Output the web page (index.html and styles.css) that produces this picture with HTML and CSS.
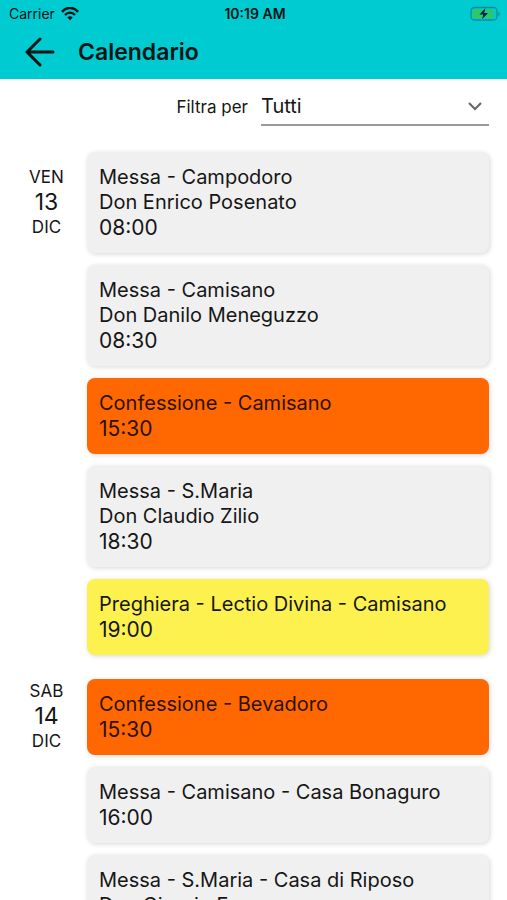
FILE: index.html
```html
<!DOCTYPE html>
<html lang="it">
<head>
<meta charset="utf-8">
<meta name="viewport" content="width=device-width, initial-scale=1">
<title>Calendario</title>
<link rel="stylesheet" href="styles.css">
</head>
<body>
<header class="top">
  <div class="status">
    <div class="carrier">
      <span>Carrier</span>
      <svg width="18" height="14" viewBox="0 0 18 14" fill="none" stroke="currentColor" aria-hidden="true">
        <path d="M1 4.800C5.300-.3 12.700-.3 17 4.800" stroke-width="2.600"/>
        <path d="M4 8C6.700 4.900 11.300 4.900 14 8" stroke-width="2.300"/>
        <path d="M9 13.300 6.300 10.400Q9 8 11.700 10.400Z" fill="currentColor" stroke="none"/>
      </svg>
    </div>
    <time class="clock">10:19 AM</time>
    <div class="battery">
      <svg width="31" height="16" viewBox="0 0 31 16" aria-hidden="true">
        <rect x="1" y="1.500" width="26" height="12.500" rx="3.500" fill="none" stroke="#128b90" stroke-width="1.300"/>
        <rect x="3" y="3.500" width="20" height="8.500" rx="1.500" fill="#35c759"/>
        <path d="M28.500 5.500Q31 8 28.500 10.500Z" fill="#128b90"/>
        <path d="M15.500 2 9.500 8.600H13.300L12 13.600 18 7H14.200Z" fill="#062024" stroke="#00cbd0" stroke-width="1.500" paint-order="stroke"/>
      </svg>
    </div>
  </div>
  <div class="bar">
    <button class="back" type="button" aria-label="Indietro">
      <svg width="30" height="30" viewBox="0 0 30 30" fill="none" stroke="currentColor" stroke-width="3" stroke-linecap="round" stroke-linejoin="round" aria-hidden="true">
        <path d="M28 15H2M15 2 2 15 15 28"/>
      </svg>
    </button>
    <h1 class="title">Calendario</h1>
  </div>
</header>
<main class="content">
  <form class="filter">
    <label for="tipo">Filtra per</label>
    <div class="select">
      <select id="tipo">
        <option>Tutti</option>
        <option>Messa</option>
        <option>Confessione</option>
        <option>Preghiera</option>
      </select>
      <svg class="chevron" width="14" height="10" viewBox="0 0 14 10" fill="none" stroke="currentColor" stroke-width="2" aria-hidden="true">
        <path d="M1 2 7 8 13 2"/>
      </svg>
    </div>
  </form>
  <section class="day">
    <h2 class="date"><span>VEN</span><span class="num">13</span><span>DIC</span></h2>
    <ul class="events">
      <li class="card"><p>Messa - Campodoro</p><p>Don Enrico Posenato</p><p class="time">08:00</p></li>
      <li class="card"><p>Messa - Camisano</p><p>Don Danilo Meneguzzo</p><p class="time">08:30</p></li>
      <li class="card confession"><p>Confessione - Camisano</p><p class="time">15:30</p></li>
      <li class="card"><p>Messa - S.Maria</p><p>Don Claudio Zilio</p><p class="time">18:30</p></li>
      <li class="card prayer"><p>Preghiera - Lectio Divina - Camisano</p><p class="time">19:00</p></li>
    </ul>
  </section>
  <section class="day">
    <h2 class="date"><span>SAB</span><span class="num">14</span><span>DIC</span></h2>
    <ul class="events">
      <li class="card confession"><p>Confessione - Bevadoro</p><p class="time">15:30</p></li>
      <li class="card"><p>Messa - Camisano - Casa Bonaguro</p><p class="time">16:00</p></li>
      <li class="card"><p>Messa - S.Maria - Casa di Riposo</p><p>Don Giorgio Fava</p><p class="time">16:30</p></li>
    </ul>
  </section>
</main>
</body>
</html>
```
FILE: styles.css
```css
* {
  box-sizing: border-box;
}

body {
  margin: 0;
  height: 100vh;
  display: flex;
  flex-direction: column;
  font-family: Inter, "Liberation Sans", sans-serif;
  color: #161616;
  background: #fff;
}

.top {
  flex: none;
  background: #00cbd0;
  color: #061416;
}

.status {
  display: grid;
  grid-template-columns: 1fr auto 1fr;
  align-items: center;
  height: 27px;
  padding: 0 6px 0 9px;
  font-size: 14px;
}

.carrier {
  display: flex;
  align-items: center;
  gap: 6px;
}

.clock {
  font-weight: 600;
}

.battery {
  display: flex;
  justify-content: flex-end;
}

.bar {
  display: flex;
  align-items: center;
  gap: 23px;
  height: 52px;
  padding: 0 25px 2px;
}

.back {
  display: flex;
  padding: 0;
  border: 0;
  background: none;
  color: inherit;
}

.title {
  margin: 0;
  font-size: 23px;
  font-weight: 600;
}

.content {
  flex: 1;
  min-height: 0;
  overflow-y: auto;
  scrollbar-width: none;
  padding: 9px 18px 24px 0;
}

.filter {
  display: flex;
  justify-content: flex-end;
  align-items: center;
  gap: 13px;
  margin-bottom: 26px;
  font-size: 17px;
}

.select {
  position: relative;
  flex: 0 1 228px;
  border-bottom: 2px solid #999;
}

.select select {
  display: block;
  width: 100%;
  height: 36px;
  padding: 0;
  border: 0;
  appearance: none;
  background: none;
  font: inherit;
  font-size: 20px;
  color: inherit;
}

.chevron {
  position: absolute;
  right: 7px;
  top: 13px;
  color: #666;
  pointer-events: none;
}

.day {
  display: grid;
  grid-template-columns: 87px 1fr;
  margin-bottom: 24px;
}

.date {
  display: flex;
  flex-direction: column;
  align-items: center;
  margin: 0;
  padding: 13px 0 0 6px;
  font-size: 17px;
  font-weight: 400;
  line-height: 25px;
}

.day + .day .date {
  padding-top: 0;
}

.num {
  font-size: 23px;
}

.events {
  display: flex;
  flex-direction: column;
  gap: 12px;
  margin: 0;
  padding: 0;
  list-style: none;
}

.card {
  padding: 13px 12px;
  border-radius: 8px;
  background: #f0f0f0;
  box-shadow: 1px 1px 5px rgba(0, 0, 0, 0.16);
  font-size: 20px;
  line-height: 25px;
}

.card p {
  margin: 0;
}

.card .time {
  font-size: 21px;
}

.confession {
  background: #ff6700;
  color: #2b1204;
}

.prayer {
  background: #fdf150;
}
```
